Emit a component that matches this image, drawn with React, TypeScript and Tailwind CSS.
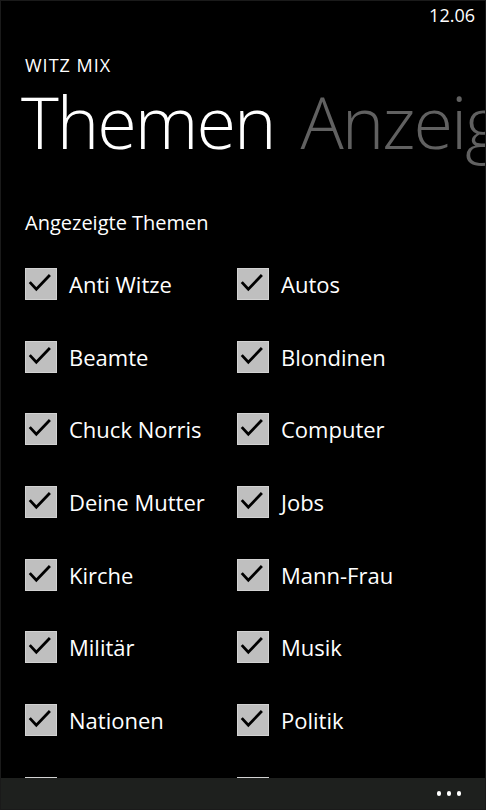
import React from 'react';

const topics: [string, string][] = [
  ['Anti Witze', 'Autos'],
  ['Beamte', 'Blondinen'],
  ['Chuck Norris', 'Computer'],
  ['Deine Mutter', 'Jobs'],
  ['Kirche', 'Mann-Frau'],
  ['Militär', 'Musik'],
  ['Nationen', 'Politik'],
  ['', ''],
];

function CheckItem({ label }: { label: string }) {
  return (
    <div className="flex items-center h-[32px]">
      <div className="w-[32px] h-[32px] shrink-0 bg-[#bfbfbf] border border-[#d2d2d2]">
        {label && (
          <svg viewBox="0 0 32 32" className="w-[30px] h-[30px]">
            <path d="M4 14 L11 21.5 L25.5 6.5" fill="none" stroke="#000" strokeWidth="3" />
          </svg>
        )}
      </div>
      <span className="ml-[12px] text-[22px] leading-[32px] text-white">{label}</span>
    </div>
  );
}

export default function App() {
  return (
    <div
      className="relative w-[486px] h-[810px] bg-black overflow-hidden border border-[#1a1a1a]"
      style={{ fontFamily: '"Open Sans", "Noto Sans", sans-serif' }}
    >
      {/* Status bar */}
      <div className="h-[29px] pt-[5px] pr-[10px] flex justify-end">
        <span className="text-[18px] leading-[18px] text-white">12.06</span>
      </div>

      {/* Pivot header */}
      <div className="mt-[26px] pl-[24px] text-[18px] leading-[18px] tracking-[1px] text-white">WITZ MIX</div>
      <div className="mt-[11px] pl-[20px] flex whitespace-nowrap text-[72px] leading-[72px] font-light tracking-[-2px]">
        <span className="text-white">Themen</span>
        <span className="ml-[26px] text-[#616161]">Anzeige</span>
      </div>

      {/* Content */}
      <div className="mt-[56px] pl-[24px] text-[20px] leading-[20px] text-white">Angezeigte Themen</div>
      <div className="mt-[35px] pl-[24px] grid grid-cols-[212px_212px]">
        {topics.map(([a, b], i) => (
          <React.Fragment key={i}>
            <div className="h-[72.7px]">
              <CheckItem label={a} />
            </div>
            <div className="h-[72.7px]">
              <CheckItem label={b} />
            </div>
          </React.Fragment>
        ))}
      </div>

      {/* App bar */}
      <div className="absolute left-0 right-0 bottom-0 h-[31px] bg-[#1e201e] flex items-center justify-end pr-[24px] gap-[5.5px]">
        <span className="w-[4.5px] h-[4.5px] rounded-full bg-white" />
        <span className="w-[4.5px] h-[4.5px] rounded-full bg-white" />
        <span className="w-[4.5px] h-[4.5px] rounded-full bg-white" />
      </div>
    </div>
  );
}
